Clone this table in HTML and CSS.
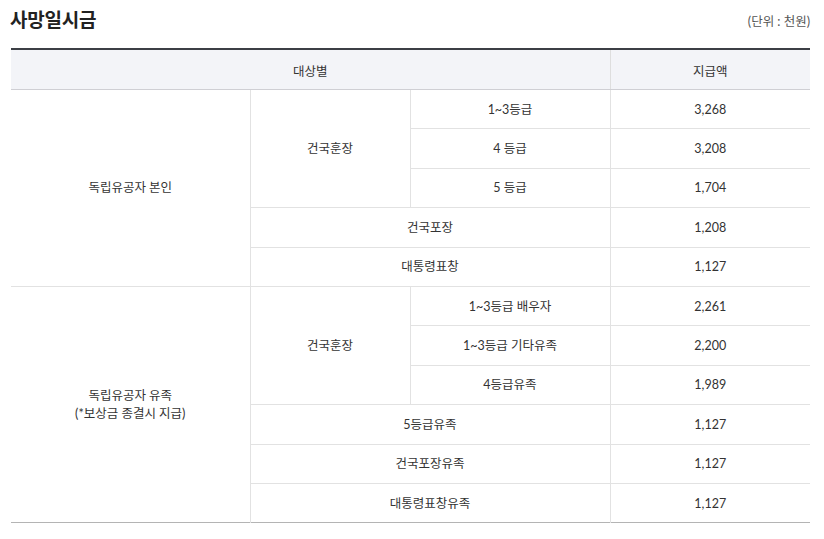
FILE: index.html
```html
<!DOCTYPE html>
<html lang="ko">
<head>
<meta charset="utf-8">
<link rel="stylesheet" href="styles.css">
</head>
<body>
<div class="wrap">
  <div class="head">
    <h2 class="title">사망일시금</h2>
    <span class="unit">(단위 : 천원)</span>
  </div>
  <table class="tbl">
    <colgroup>
      <col class="c1"><col class="c2"><col class="c3"><col class="c4">
    </colgroup>
    <thead>
      <tr><th colspan="3">대상별</th><th>지급액</th></tr>
    </thead>
    <tbody>
      <tr><td rowspan="5" class="first">독립유공자 본인</td><td rowspan="3">건국훈장</td><td>1~3등급</td><td>3,268</td></tr>
      <tr><td>4 등급</td><td>3,208</td></tr>
      <tr><td>5 등급</td><td>1,704</td></tr>
      <tr><td colspan="2">건국포장</td><td>1,208</td></tr>
      <tr><td colspan="2">대통령표창</td><td>1,127</td></tr>
      <tr><td rowspan="6" class="first">독립유공자 유족<br>(*보상금 종결시 지급)</td><td rowspan="3">건국훈장</td><td>1~3등급 배우자</td><td>2,261</td></tr>
      <tr><td>1~3등급 기타유족</td><td>2,200</td></tr>
      <tr><td>4등급유족</td><td>1,989</td></tr>
      <tr><td colspan="2">5등급유족</td><td>1,127</td></tr>
      <tr><td colspan="2">건국포장유족</td><td>1,127</td></tr>
      <tr><td colspan="2">대통령표창유족</td><td>1,127</td></tr>
    </tbody>
  </table>
</div>
</body>
</html>
```
FILE: styles.css
```css
html, body { margin: 0; padding: 0; background: #fff; }
body { font-family: Lato, "Noto Sans CJK KR", sans-serif; color: #333; }
.wrap { padding: 6px 14px 0 11px; }
.head { display: flex; justify-content: space-between; align-items: center; height: 28px; margin-bottom: 14px; }
.title { margin: 0 0 0 -1px; font-size: 19px; font-weight: 700; color: #222; letter-spacing: -0.2px; line-height: 28px; }
.unit { font-size: 12.5px; color: #555; margin-right: 0; }
.tbl { width: 799px; border-collapse: collapse; table-layout: fixed; border-top: 2px solid #3c3f45; border-bottom: 1px solid #b4b4b4; font-size: 12.5px; }
.c1 { width: 239px; } .c2 { width: 160px; } .c3 { width: 200px; } .c4 { width: 200px; }
th { background: #f3f4f8; font-weight: 400; height: 38px; padding: 1px 0 0; text-align: center; border-bottom: 1px solid #cfcfd4; border-left: 1px solid #dedede; color: #333; }
th:first-child { border-left: 0; }
td { height: 37.4px; padding: 1px 0 0; text-align: center; border-top: 1px solid #e2e2e2; border-left: 1px solid #e2e2e2; line-height: 18px; color: #333; }
td.first { border-left: 0; }
tbody tr:first-child td { border-top: 0; }
```
